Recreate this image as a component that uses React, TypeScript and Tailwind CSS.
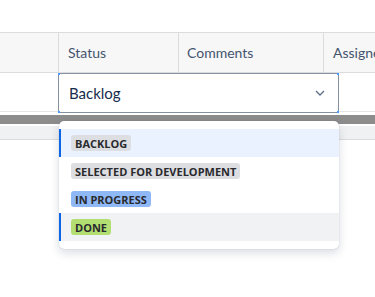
import React from "react";

const items = [
  { label: "BACKLOG", badge: "bg-[#dddee1]", selected: true },
  { label: "SELECTED FOR DEVELOPMENT", badge: "bg-[#dddee1]" },
  { label: "IN PROGRESS", badge: "bg-[#8fb8f6]" },
  { label: "DONE", badge: "bg-[#b3df72]", hover: true },
];

export default function App() {
  return (
    <div
      className="relative w-[375px] h-[297px] bg-white overflow-hidden"
      style={{ fontFamily: 'Lato, "Open Sans", sans-serif' }}
    >
      <div className="h-[32px]" />
      <div className="flex h-[41px] bg-[#f7f7f7] border-y border-[#dcdcdc] text-[14px] text-[#44546f]">
        <div className="w-[59px] shrink-0 border-r border-[#dcdcdc]" />
        <div className="w-[120px] shrink-0 border-r border-[#dcdcdc] flex items-center pl-[9px]">Status</div>
        <div className="w-[145px] shrink-0 border-r border-[#dcdcdc] flex items-center pl-[8px]">Comments</div>
        <div className="flex-1 min-w-0 flex items-center pl-[9px] whitespace-nowrap overflow-hidden">Assignee</div>
      </div>
      <div className="h-[39px] border-b border-[#e4e4e4]" />
      <div className="h-[3px]" />
      <div className="h-[9px] bg-[#8c8c8c]" />
      <div className="h-[2px]" />
      <div className="h-[14px] bg-[#f0f1f2] border-b border-[#dcdcdc]" />

      <div className="absolute left-[58px] top-[73px] w-[281px] h-[40px] border border-[#8590a2] bg-white flex items-center pl-[10px] pr-[13px] text-[15px] text-[#172b4d]">
        <span className="flex-1">Backlog</span>
        <svg width="10" height="6" viewBox="0 0 10 6" fill="none">
          <path d="M1 1l4 4 4-4" stroke="#5e6c84" strokeWidth="1.3" />
        </svg>
        <span className="absolute -left-px -top-px w-[2px] h-[2px] bg-[#4c9aff]" />
        <span className="absolute -right-px -top-px w-[2px] h-[2px] bg-[#4c9aff]" />
        <span className="absolute -left-px -bottom-px w-[2px] h-[2px] bg-[#4c9aff]" />
        <span className="absolute -right-px -bottom-px w-[2px] h-[2px] bg-[#4c9aff]" />
      </div>

      <div className="absolute left-[59px] top-[121px] w-[280px] bg-white rounded-[5px] py-[8px] shadow-[0_4px_10px_rgba(9,30,66,0.15),0_0_1px_rgba(9,30,66,0.3)]">
        {items.map((it) => (
          <div
            key={it.label}
            className={
              "h-[28px] flex items-center pl-[10px] border-l-2 " +
              (it.selected
                ? "bg-[#e9f2fe] border-[#0c66e4]"
                : it.hover
                ? "bg-[#f1f2f4] border-[#0c66e4]"
                : "border-transparent")
            }
          >
            <span
              className={
                "h-[16px] px-[4px] rounded-[3px] flex items-center text-[11px] font-bold text-[#292a2e] leading-none font-['Open_Sans',sans-serif] " +
                it.badge
              }
            >
              {it.label}
            </span>
          </div>
        ))}
      </div>
    </div>
  );
}
